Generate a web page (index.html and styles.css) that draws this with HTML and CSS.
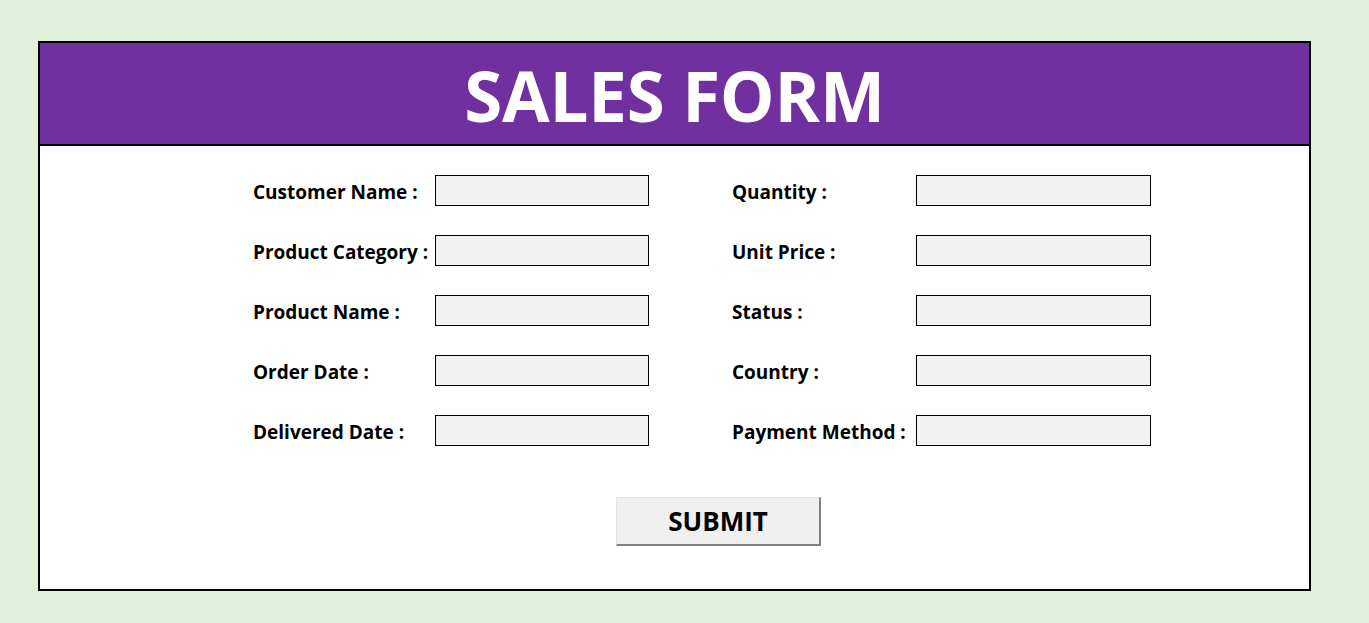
FILE: index.html
```html
<!DOCTYPE html>
<html>
<head>
<meta charset="utf-8">
<link rel="stylesheet" href="styles.css">
</head>
<body>
<div class="form-box">
  <div class="header"><h1 class="title">SALES FORM</h1></div>
  <div class="body">
    <div class="fields">
      <div class="col col-left">
        <div class="row"><span class="label">Customer Name :</span><span class="input"></span></div>
        <div class="row"><span class="label">Product Category :</span><span class="input"></span></div>
        <div class="row"><span class="label">Product Name :</span><span class="input"></span></div>
        <div class="row"><span class="label">Order Date :</span><span class="input"></span></div>
        <div class="row"><span class="label">Delivered Date :</span><span class="input"></span></div>
      </div>
      <div class="col col-right">
        <div class="row"><span class="label">Quantity :</span><span class="input"></span></div>
        <div class="row"><span class="label">Unit Price :</span><span class="input"></span></div>
        <div class="row"><span class="label">Status :</span><span class="input"></span></div>
        <div class="row"><span class="label">Country :</span><span class="input"></span></div>
        <div class="row"><span class="label">Payment Method :</span><span class="input"></span></div>
      </div>
    </div>
    <div class="actions"><button class="submit">SUBMIT</button></div>
  </div>
</div>
</body>
</html>
```

FILE: styles.css
```css
html, body {
  margin: 0;
  padding: 0;
  background: #e2efda;
}
body {
  padding: 41px 0 0 38px;
  font-family: "Open Sans", "Liberation Sans", sans-serif;
}
.form-box {
  width: 1273px;
  height: 550px;
  box-sizing: border-box;
  border: 2px solid #000;
  background: #fff;
  display: flex;
  flex-direction: column;
}
.header {
  background: #7030a0;
  height: 103px;
  flex: none;
  box-sizing: border-box;
  border-bottom: 2px solid #000;
  display: flex;
  align-items: center;
  justify-content: center;
}
.title {
  margin: 0;
  color: #fff;
  font-size: 69px;
  font-weight: 700;
  line-height: 1;
  letter-spacing: -0.2px;
  padding-top: 4px;
}
.body {
  padding: 29px 0 0 213px;
  display: flex;
  flex-direction: column;
}
.fields {
  display: flex;
  gap: 83px;
}
.col {
  display: flex;
  flex-direction: column;
  gap: 29px;
}
.row {
  display: flex;
  align-items: center;
  height: 31px;
}
.label {
  font-size: 19px;
  font-weight: 700;
  color: #000;
  white-space: nowrap;
  padding-top: 2px;
}
.col-left .label { width: 182px; }
.col-right .label { width: 184px; }
.input {
  height: 31px;
  box-sizing: border-box;
  border: 1px solid #000;
  background: #f2f2f2;
}
.col-left .input { width: 214px; }
.col-right .input { width: 235px; }
.actions {
  padding: 51px 0 0 363px;
}
.submit {
  width: 205px;
  height: 49px;
  box-sizing: border-box;
  background: #f0f0f0;
  border: 0;
  border-right: 2px solid #808080;
  border-bottom: 2px solid #808080;
  border-top: 1px solid #e3e3e3;
  border-left: 1px solid #e3e3e3;
  font-family: "Open Sans", "Liberation Sans", sans-serif;
  font-size: 26px;
  font-weight: 700;
  color: #000;
  padding: 0;
  line-height: 1;
}
```
